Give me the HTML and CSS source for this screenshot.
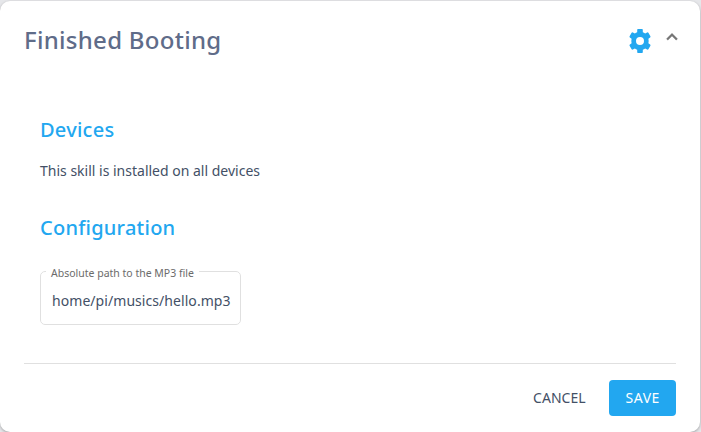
FILE: index.html
```html
<!DOCTYPE html>
<html lang="en">
<head>
<meta charset="utf-8">
<title>Finished Booting</title>
<link rel="stylesheet" href="styles.css">
</head>
<body>
<main class="card">
  <header class="header">
    <h1 class="title">Finished Booting</h1>
    <svg class="gear" viewBox="0 0 22 24"><path fill-rule="evenodd" d="M9 0h4q.8 0 .8.8V3.200a9.300 9.300 0 0 1 2.300 1.300l2-1.100q.8-.4 1.300.3l2 3.600q.4.700-.3 1.200L19.400 9.800a9.300 9.300 0 0 1 0 4.400l1.700 1.300q.7.500.3 1.200l-2 3.600q-.5.700-1.300.3l-2-1.100a9.300 9.300 0 0 1-2.300 1.300v2.400q0 .8-.8.8H9q-.8 0-.8-.8v-2.400a9.300 9.300 0 0 1-2.300-1.300l-2 1.100q-.8.4-1.300-.3l-2-3.600q-.4-.7.3-1.200l1.700-1.300a9.300 9.300 0 0 1 0-4.400L.9 8.500q-.7-.5-.3-1.200l2-3.600q.5-.7 1.300-.3l2 1.100a9.300 9.300 0 0 1 2.300-1.300V.8Q8.200 0 9 0zM11 8a4 4 0 1 0 0 8 4 4 0 0 0 0-8z"/></svg>
    <svg class="chevron" viewBox="0 0 24 24"><path d="M12 8l-6 6 1.410 1.410L12 10.830l4.590 4.580L18 14z"/></svg>
  </header>
  <div class="content">
    <h2 class="subtitle">Devices</h2>
    <p class="text">This skill is installed on all devices</p>
    <h2 class="subtitle">Configuration</h2>
    <fieldset class="field">
      <legend class="label">Absolute path to the MP3 file</legend>
      <span class="value">home/pi/musics/hello.mp3</span>
    </fieldset>
  </div>
  <footer class="actions">
    <button class="button">CANCEL</button>
    <button class="button primary">SAVE</button>
  </footer>
</main>
</body>
</html>
```
FILE: styles.css
```css
* { box-sizing: border-box; }
body {
  margin: 0;
  background: #e6e7ea;
  font-family: "Noto Sans", sans-serif;
  color: #435066;
}
.card {
  width: 700px;
  height: 431px;
  margin-top: 1px;
  padding: 0 24px;
  background: #fff;
  border-radius: 10px;
  box-shadow: 0 1px 3px rgba(0, 0, 0, 0.3);
  display: flex;
  flex-direction: column;
}
.header {
  display: flex;
  height: 80px;
  align-items: center;
}
.title {
  margin: -2px 0 0;
  flex: 1;
  font-size: 24px;
  line-height: 32px;
  font-weight: 500;
  letter-spacing: 0.28px;
  color: #5f6c89;
}
.gear { width: 22px; height: 24px; fill: #22a7f0; }
.chevron { width: 22px; height: 22px; margin: -9px -7px 0 10px; fill: #757575; stroke: #757575; stroke-width: 0.4; }
.content { padding: 33px 16px 0; flex: 1; }
.subtitle {
  margin: 0;
  font-size: 20px;
  line-height: 32px;
  font-weight: 500;
  letter-spacing: 0.24px;
  color: #22a7f0;
}
.text { margin: 13px 0 29px; font-size: 14px; line-height: 24px; }
.field {
  margin: 19px 0 0;
  width: 201px;
  min-width: 0;
  height: 62px;
  padding: 0 8px 0 11px;
  border: 1px solid #e0e0e0;
  border-radius: 5px;
}
.label { margin-left: -6px; padding: 4px 5px 0; font-size: 10.5px; line-height: 12px; color: #6b6b6b; }
.value { display: block; margin-top: 10px; font-size: 14px; line-height: 24px; letter-spacing: 0.06px; white-space: nowrap; }
.actions {
  height: 69px;
  border-top: 1px solid #e0e0e0;
  display: flex;
  justify-content: flex-end;
  padding-top: 16px;
  gap: 8px;
}
.button {
  height: 36px;
  padding: 0 15.5px 1px 16px;
  border: 0;
  border-radius: 4px;
  background: transparent;
  font: 14px "Noto Sans", sans-serif;
  color: #435066;
}
.primary {
  width: 67px;
  background: #22a7f0;
  color: #fff;
  letter-spacing: 0.5px;
}
```
